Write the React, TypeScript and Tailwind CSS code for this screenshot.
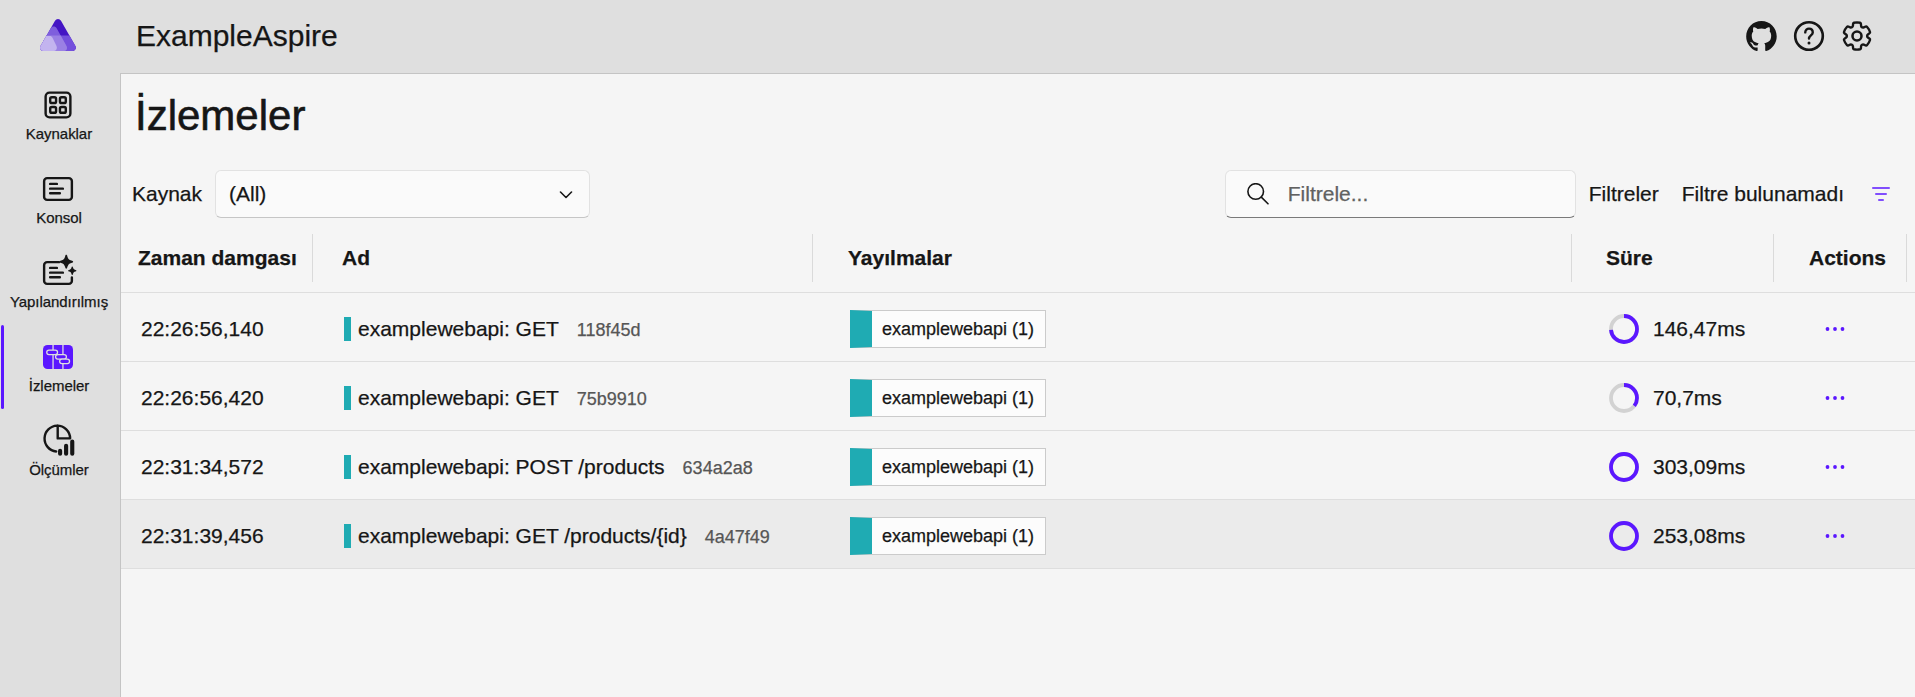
import React from "react";

const gearPath =
  "M12.0122 2.25C12.7462 2.25846 13.4773 2.34326 14.1937 2.50304C14.5064 2.57279 14.7403 2.83351 14.7758 3.15196L14.946 4.67881C15.0231 5.37986 15.615 5.91084 16.3206 5.91158C16.5103 5.91188 16.6979 5.87238 16.8732 5.79483L18.2738 5.17956C18.5651 5.05159 18.9055 5.12136 19.1229 5.35362C20.1351 6.43464 20.8889 7.73115 21.3277 9.14558C21.4223 9.45058 21.3134 9.78203 21.0564 9.9715L19.8149 10.8866C19.4607 11.1468 19.2516 11.56 19.2516 11.9995C19.2516 12.4389 19.4607 12.8521 19.8157 13.1129L21.0582 14.0283C21.3153 14.2177 21.4243 14.5492 21.3297 14.8543C20.8911 16.2685 20.1377 17.5649 19.1261 18.6461C18.9089 18.8783 18.5688 18.9483 18.2775 18.8206L16.8712 18.2045C16.4688 18.0284 16.0068 18.0542 15.6265 18.274C15.2463 18.4937 14.9933 18.8812 14.945 19.3177L14.7759 20.8444C14.741 21.1592 14.5122 21.4182 14.204 21.4915C12.7556 21.8361 11.2465 21.8361 9.79803 21.4915C9.48991 21.4182 9.26105 21.1592 9.22618 20.8444L9.05736 19.32C9.00777 18.8843 8.75434 18.498 8.37442 18.279C7.99451 18.06 7.5332 18.0343 7.1322 18.2094L5.72557 18.8256C5.43422 18.9533 5.09403 18.8833 4.87678 18.6509C3.86462 17.5685 3.11119 16.2705 2.6732 14.8548C2.57886 14.5499 2.68786 14.2186 2.94485 14.0293L4.18818 13.1133C4.54232 12.8531 4.75147 12.4399 4.75147 12.0005C4.75147 11.561 4.54232 11.1478 4.18771 10.8873L2.94516 9.97285C2.6878 9.78345 2.5787 9.45178 2.67337 9.14658C3.11212 7.73215 3.86594 6.43564 4.87813 5.35462C5.09559 5.12236 5.43594 5.05259 5.72724 5.18056L7.12762 5.79572C7.53056 5.97256 7.9938 5.94585 8.37577 5.72269C8.75609 5.50209 9.00929 5.11422 9.05817 4.67764L9.22824 3.15196C9.26376 2.83335 9.49786 2.57254 9.8108 2.50294C10.5281 2.34342 11.26 2.25865 12.0122 2.25Z";

const githubPath =
  "M48.854 0C21.839 0 0 22 0 49.217c0 21.756 13.993 40.172 33.405 46.69 2.427.49 3.316-1.059 3.316-2.362 0-1.141-.08-5.052-.08-9.127-13.59 2.934-16.42-5.867-16.42-5.867-2.184-5.704-5.42-7.17-5.42-7.17-4.448-3.015.324-3.015.324-3.015 4.934.326 7.523 5.052 7.523 5.052 4.367 7.496 11.404 5.378 14.235 4.074.404-3.178 1.699-5.378 3.074-6.6-10.839-1.141-22.243-5.378-22.243-24.283 0-5.378 1.94-9.778 5.014-13.2-.485-1.222-2.184-6.275.486-13.038 0 0 4.125-1.304 13.426 5.052a46.97 46.97 0 0 1 12.214-1.63c4.125 0 8.33.571 12.213 1.63 9.302-6.356 13.427-5.052 13.427-5.052 2.67 6.763.97 11.816.485 13.038 3.155 3.422 5.015 7.822 5.015 13.2 0 18.905-11.404 23.06-22.324 24.283 1.78 1.548 3.316 4.481 3.316 9.126 0 6.6-.08 11.897-.08 13.526 0 1.304.89 2.853 3.316 2.364 19.412-6.52 33.405-24.935 33.405-46.691C97.707 22 75.788 0 48.854 0z";

function NavSvg({ children }: { children: React.ReactNode }) {
  return (
    <svg
      viewBox="0 0 24 24"
      className="block h-9 w-9 overflow-visible"
      fill="none"
      stroke="currentColor"
      strokeWidth="1.6"
      strokeLinecap="round"
      strokeLinejoin="round"
    >
      {children}
    </svg>
  );
}

const icons = {
  resources: (
    <NavSvg>
      <rect x="3.75" y="3.75" width="16.5" height="16.5" rx="2.6" />
      <rect x="6.8" y="6.8" width="3.9" height="3.9" rx="1.1" />
      <rect x="13.3" y="6.8" width="3.9" height="3.9" rx="1.1" />
      <rect x="6.8" y="13.3" width="3.9" height="3.9" rx="1.1" />
      <rect x="13.3" y="13.3" width="3.9" height="3.9" rx="1.1" />
    </NavSvg>
  ),
  console: (
    <NavSvg>
      <rect x="2.75" y="4.75" width="18.5" height="14.5" rx="2" />
      <path d="M6.75 8.6h4.5M6.75 11.75h8.5M6.75 14.8h6.5" />
    </NavSvg>
  ),
  structured: (
    <NavSvg>
      <path d="M12.6 4.75H4.75a2 2 0 0 0-2 2v10.5a2 2 0 0 0 2 2h14.5a2 2 0 0 0 2-2V15" />
      <path d="M6.75 8.6h4.5M6.75 11.75h8.500M6.750 14.800h6.500" />
      <path
        stroke="none"
        fill="currentColor"
        d="M17.5-.1c.5 0 .6.5.8 1.2.5 1.6 1 2.1 2.600 2.600.7.2 1.200.3 1.200.8s-.5.600-1.200.8c-1.600.5-2.100 1-2.600 2.600-.2.7-.3 1.200-.8 1.200s-.6-.5-.8-1.200c-.5-1.600-1-2.100-2.600-2.600-.7-.2-1.200-.3-1.200-.8s.5-.6 1.200-.8c1.600-.5 2.100-1 2.600-2.600.2-.7.3-1.200.8-1.200Z"
      />
      <path
        stroke="none"
        fill="currentColor"
        d="M21.5 7.7c.3 0 .4.3.5.7.3 1 .6 1.300 1.600 1.600.4.1.7.2.7.5s-.3.4-.7.5c-1 .3-1.300.600-1.600 1.600-.1.400-.2.700-.5.700s-.4-.3-.5-.7c-.3-1-.6-1.300-1.600-1.600-.4-.1-.7-.2-.7-.5s.3-.4.7-.5c1-.3 1.300-.600 1.600-1.600.1-.4.2-.7.5-.7Z"
      />
    </NavSvg>
  ),
  traces: (
    <NavSvg>
      <rect x="2" y="4" width="20" height="16" rx="3" fill="#5b17ff" stroke="none" />
      <g stroke="#dfdfdf" strokeWidth="0.85" strokeLinecap="butt">
        <path d="M8.7 4v3.400M8.700 10.400V20M15.300 4v6.400M15.300 16.500V20" />
        <rect x="4.500" y="7.400" width="7.200" height="3" rx="1.500" />
        <rect x="10.400" y="10.400" width="7.200" height="3" rx="1.500" />
        <rect x="13.100" y="13.400" width="6.600" height="3" rx="1.500" fill="#5b17ff" />
      </g>
    </NavSvg>
  ),
  metrics: (
    <NavSvg>
      <path d="M10.800 19A8.650 8.650 0 0 1 11.400 1.750a8.650 8.650 0 0 1 8.700 8.500H11.800V1.750" />
      <path d="M13.400 18.500v2M17.400 15.200v5.300M21.500 12.300v8.200" strokeWidth="2.750" />
    </NavSvg>
  ),
};

const navItems = [
  { label: "Kaynaklar", icon: icons.resources },
  { label: "Konsol", icon: icons.console },
  { label: "Yapılandırılmış", icon: icons.structured },
  { label: "İzlemeler", icon: icons.traces, active: true },
  { label: "Ölçümler", icon: icons.metrics },
];

const traces = [
  { time: "22:26:56,140", name: "examplewebapi: GET", id: "118f45d", duration: "146,47ms", ratio: 0.735 },
  { time: "22:26:56,420", name: "examplewebapi: GET", id: "75b9910", duration: "70,7ms", ratio: 0.352 },
  { time: "22:31:34,572", name: "examplewebapi: POST /products", id: "634a2a8", duration: "303,09ms", ratio: 1 },
  { time: "22:31:39,456", name: "examplewebapi: GET /products/{id}", id: "4a47f49", duration: "253,08ms", ratio: 1, hovered: true },
];

function AspireLogo() {
  return (
    <svg viewBox="0 0 36 32" className="block h-8 w-9">
      <defs>
        <clipPath id="logo-bottom">
          <rect x="0" y="16.5" width="36" height="16" />
        </clipPath>
      </defs>
      <path d="M15 1.7a3.5 3.5 0 0 1 6 0L35.4 27a3.3 3.3 0 0 1-2.9 5H3.5a3.3 3.3 0 0 1-2.9-5Z" fill="#4415c4" />
      <path d="M15 1.7a3.5 3.5 0 0 1 6 0L35.4 27a3.3 3.3 0 0 1-2.9 5H3.5a3.3 3.3 0 0 1-2.9-5Z" fill="#7450dc" clipPath="url(#logo-bottom)" />
      <path d="M10.6 9.5c1.6-2.6 4.6-2.6 6.2 0L26.5 27c1.2 2.5.2 5-2.5 5H3.5a3.3 3.3 0 0 1-2.9-5Z" fill="#7f5fdd" />
      <path d="M10.6 9.5c1.6-2.6 4.6-2.6 6.2 0L26.5 27c1.2 2.5.2 5-2.5 5H3.5a3.3 3.3 0 0 1-2.9-5Z" fill="#9a80e4" clipPath="url(#logo-bottom)" />
      <path d="M6.3 17h4.2c1 .3 1.4.9 2 1.8L16.5 27c1 2.7-.2 5-2.7 5H3.5a3.3 3.3 0 0 1-2.9-5Z" fill="#c3b4ef" />
    </svg>
  );
}

function Ring({ ratio }: { ratio: number }) {
  const length = 2 * Math.PI * 13;
  return (
    <svg viewBox="0 0 30 30" className="block h-[30px] w-[30px] shrink-0" fill="none" strokeWidth="3.8">
      <circle cx="15" cy="15" r="13" stroke="#d2d2d2" />
      <circle
        cx="15"
        cy="15"
        r="13"
        stroke="#5b17ff"
        strokeDasharray={ratio === 1 ? undefined : `${length * ratio} ${length}`}
        transform="rotate(-90 15 15)"
      />
    </svg>
  );
}

const columns = "grid grid-cols-[192px_500px_759px_202px_133px_1fr]";

export default function App() {
  return (
    <div className="flex h-[697px] w-full flex-col overflow-hidden bg-[#dfdfdf] font-['Liberation_Sans',Arial,sans-serif] text-[21px] leading-[30px] text-[#161616] [-webkit-text-stroke:0.25px]">
      <header className="flex h-[73px] shrink-0 items-center">
        <div className="flex w-[120px] shrink-0 justify-center pr-1 pb-[3px]">
          <AspireLogo />
        </div>
        <div className="grow pb-px pl-4 text-[30px]">ExampleAspire</div>
        <div className="flex items-center gap-3 pr-10 pb-px">
          <div className="flex h-9 w-9 items-center justify-center">
            <svg viewBox="0 0 98 96" className="h-[30px] w-[31px]" fill="currentColor">
              <path fillRule="evenodd" clipRule="evenodd" d={githubPath} />
            </svg>
          </div>
          <svg viewBox="0 0 24 24" className="h-9 w-9" fill="none" stroke="currentColor" strokeWidth="1.6" strokeLinecap="round" strokeLinejoin="round">
            <circle cx="12" cy="12" r="9.2" strokeWidth="1.75" />
            <path d="M9.5 9.600c0-3.400 5-3.300 5 0 0 1.900-2.500 2.100-2.500 4.100" />
            <circle cx="12" cy="16.700" r="1" fill="currentColor" stroke="none" />
          </svg>
          <svg viewBox="0 0 24 24" className="h-9 w-9" fill="none" stroke="currentColor" strokeWidth="1.7">
            <path d={gearPath} transform="translate(12 12) scale(0.93) translate(-12 -12)" />
            <circle cx="12" cy="12" r="3" />
          </svg>
        </div>
      </header>

      <div className="flex min-h-0 grow">
        <nav className="flex w-[120px] shrink-0 flex-col">
          {navItems.map((item) => (
            <a key={item.label} className="relative flex h-[84px] flex-col items-center pt-3.5 pr-1">
              {item.active && <span className="absolute top-0 left-px h-[84px] w-[3px] rounded-full bg-[#5b17ff]" />}
              {item.icon}
              <span className="ml-0.5 text-[15px] leading-[21px] tracking-[-0.05px] whitespace-nowrap">{item.label}</span>
            </a>
          ))}
        </nav>

        <main className="flex min-w-0 grow flex-col border-t border-l border-[#c4c4c4] bg-[#f5f5f5]">
          <h1 className="h-[96px] pt-[14px] pl-3.5 text-[42px] leading-[56px] [-webkit-text-stroke:0.6px]">İzlemeler</h1>

          <div className="flex h-12 items-center">
            <span className="w-[94px] pl-[11px]">Kaynak</span>
            <div className="flex h-12 w-[375px] items-center justify-between rounded-md border border-[#e2e2e2] border-b-[#c6c6c6] bg-[#fafafa] pr-4 pl-[13px]">
              <span>(All)</span>
              <svg viewBox="0 0 14 8" className="mt-0.5 h-2 w-3.5" fill="none" stroke="currentColor" strokeWidth="1.6" strokeLinecap="round" strokeLinejoin="round">
                <path d="M1.5 1l5.5 5.5L12.5 1" />
              </svg>
            </div>
            <div className="ml-auto flex h-12 w-[351px] items-center rounded-md border border-[#e2e2e2] border-b-[#7a7a7a] bg-[#fafafa] pl-[21px]">
              <svg viewBox="0 0 22 22" className="h-[22px] w-[22px]" fill="none" stroke="currentColor" strokeWidth="1.6" strokeLinecap="round">
                <circle cx="8.7" cy="8.5" r="7.8" />
                <path d="M14.3 14.1l6.7 6.7" />
              </svg>
              <span className="pl-[19px] text-[#616161]">Filtrele...</span>
            </div>
            <span className="ml-[13px]">Filtreler</span>
            <span className="ml-[23px]">Filtre bulunamadı</span>
            <svg viewBox="0 0 18 14" className="mr-[25px] ml-7 h-3.5 w-[18px]" stroke="#5b17ff" strokeWidth="1.6" strokeLinecap="round">
              <path d="M.8 1h16.4M3.8 7h10.4M6.8 13h4.4" />
            </svg>
          </div>

          <div className={`${columns} mt-4 h-[59px] border-b border-[#dedede] font-bold`}>
            <div className="flex h-12 items-center border-r border-[#dadada] pl-[17px]">Zaman damgası</div>
            <div className="flex h-12 items-center border-r border-[#dadada] pl-[29px]">Ad</div>
            <div className="flex h-12 items-center border-r border-[#dadada] pl-[35px]">Yayılmalar</div>
            <div className="flex h-12 items-center border-r border-[#dadada] pl-[34px]">Süre</div>
            <div className="flex h-12 items-center border-r border-[#dadada] pl-[35px]">Actions</div>
          </div>

          {traces.map((trace) => (
            <div
              key={trace.time}
              className={`${columns} h-[69px] items-center border-b border-[#dedede] pt-1 ${trace.hovered ? "bg-[#ebebeb]" : ""}`}
            >
              <div className="pl-5">{trace.time}</div>
              <div className="flex items-center pl-[31px] whitespace-nowrap">
                <span className="mr-[7px] h-6 w-[7px] bg-[#1fabb3]" />
                <span>{trace.name}</span>
                <span className="ml-[18px] pt-0.5 text-[18px] text-[#565656]">{trace.id}</span>
              </div>
              <div className="pl-[37px]">
                <span className="flex h-[38px] w-[196px] items-center border border-l-[22px] border-[#cbcbcb] border-l-[#1fabb3] bg-[#fcfcfc] pl-2.5 text-[18px] whitespace-nowrap">
                  examplewebapi (1)
                </span>
              </div>
              <div className="flex items-center gap-3.5 pl-[37px]">
                <Ring ratio={trace.ratio} />
                <span>{trace.duration}</span>
              </div>
              <svg viewBox="0 0 20 6" className="ml-[51px] h-1.5 w-5" fill="#5b17ff">
                <circle cx="2.5" cy="3" r="1.9" />
                <circle cx="10" cy="3" r="1.9" />
                <circle cx="17.5" cy="3" r="1.9" />
              </svg>
            </div>
          ))}
        </main>
      </div>
    </div>
  );
}
